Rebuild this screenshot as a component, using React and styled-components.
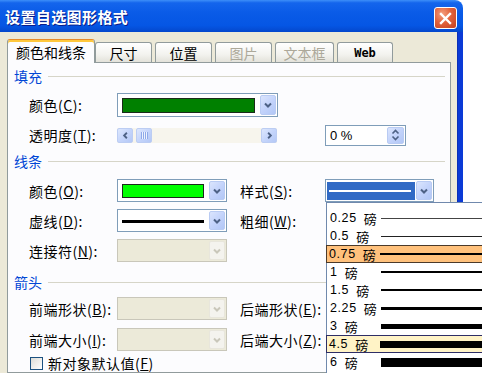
import React from 'react';
import styled, { createGlobalStyle, css } from 'styled-components';

const GlobalStyle = createGlobalStyle`
  html, body { margin: 0; padding: 0; background: #ffffff; }
  body {
    font-family: "Noto Sans CJK SC", "Noto Sans", sans-serif;
    font-size: 14px;
    color: #000;
  }
  #root { width: 482px; height: 373px; }
`;

const Screen = styled.div`
  position: relative;
  width: 482px;
  height: 373px;
  overflow: hidden;
  background: #fff;
`;

const Window = styled.div`
  width: 463px;
  height: 373px;
  display: flex;
  flex-direction: column;
`;

const TitleBar = styled.div`
  height: 32px;
  flex: none;
  display: flex;
  align-items: center;
  padding: 0 6px 0 5px;
  border-top-right-radius: 8px;
  background: linear-gradient(to bottom, #3d8ff9 0%, #1465ec 9%, #0a5be7 40%, #0556e4 80%, #0447cc 100%);
`;

const Title = styled.div`
  color: #fff;
  font-size: 15px;
  font-weight: 700;
  letter-spacing: 0.4px;
  line-height: 1;
  text-shadow: 1px 1px 0 #0a1d8a;
`;

const CloseBtn = styled.div`
  margin: 4px 0 0 auto;
  width: 23px;
  height: 22px;
  box-sizing: border-box;
  border: 1px solid #fff;
  border-radius: 3px;
  background: radial-gradient(circle at 35% 30%, #f4a07f 0%, #e2623c 45%, #c3401f 100%);
  display: flex;
  align-items: center;
  justify-content: center;
`;

const Body = styled.div`
  flex: 1;
  display: flex;
  flex-direction: column;
  background: #ece9d8;
  padding: 7px 7px 0 7px;
  border-right: 5px solid #0b3ad6;
  box-shadow: inset -1px 0 0 #0a2fb8;
`;

const TabRow = styled.div`
  display: flex;
  align-items: flex-end;
  height: 23px;
  position: relative;
  z-index: 1;
`;

const Tab = styled.div`
  width: ${p => p.$w}px;
  margin-left: ${p => p.$ml || 0}px;
  height: 20px;
  box-sizing: border-box;
  border: 1px solid #919b9c;
  border-bottom: none;
  border-radius: 3px 3px 0 0;
  background: linear-gradient(#ffffff, #f3f3ef 60%, #e3e2da);
  display: flex;
  align-items: center;
  justify-content: center;
  font-size: 14px;
  line-height: 1;
  color: ${p => (p.$disabled ? '#aca899' : '#000')};
  ${p => p.$web && css`
    font-family: "DejaVu Sans Mono", monospace;
    font-weight: 700;
    font-size: 12px;
  `}
  ${p => p.$active && css`
    height: 24px;
    margin-bottom: -1px;
    background: #fcfcfe;
    border-top-color: #e68b2c;
    box-shadow: inset 0 2px 0 #ffc83c;
    padding-top: 1px;
  `}
`;

const Panel = styled.div`
  flex: 1;
  border: 1px solid #919b9c;
  background: #fcfcfe;
  padding: 5px 5px 0 6px;
`;

const GroupHeader = styled.div`
  display: flex;
  align-items: center;
  gap: 6px;
  height: 16px;
  margin-top: ${p => p.$top || 0}px;
  color: #0046d5;
  font-size: 14px;
  line-height: 16px;
  &::after {
    content: '';
    flex: 1;
    height: 1px;
    background: #d6d5c8;
  }
`;

const FieldGrid = styled.div`
  display: grid;
  grid-template-columns: 88px 123px 85px auto;
  grid-auto-rows: ${p => p.$rowH}px;
  row-gap: ${p => p.$gap}px;
  align-items: center;
  margin: ${p => p.$top}px 0 0 15px;
`;

const Label = styled.div`
  font-size: 14px;
  letter-spacing: 0.5px;
  white-space: nowrap;
  line-height: 1;
  color: #000;
  u { text-decoration: underline; }
`;

const Combo = styled.div`
  grid-column: ${p => p.$span || 'auto'};
  width: ${p => p.$w}px;
  height: 100%;
  box-sizing: border-box;
  border: 1px solid ${p => (p.$disabled ? '#c9c7ba' : '#7f9db9')};
  background: ${p => (p.$disabled ? '#ecead9' : '#fff')};
  display: flex;
  padding: 1px;
`;

const ComboField = styled.div`
  flex: 1;
  display: flex;
  align-items: center;
  padding: ${p => (p.$flush ? '1px 1px 0 0' : '3px 5px 2px 3px')};
`;

const Swatch = styled.div`
  flex: 1;
  align-self: stretch;
  background: ${p => p.$c};
  border: 1px solid #1b2a1b;
`;

const DashLine = styled.div`
  flex: 1;
  height: 3px;
  background: #000;
`;

const SelBand = styled.div`
  flex: 1;
  align-self: stretch;
  display: flex;
  align-items: center;
  padding: 0 4px 0 2px;
  background: #316ac5;
  &::after {
    content: '';
    flex: 1;
    height: 2px;
    background: #fff;
  }
`;

const DropBtn = styled.div`
  width: 16px;
  flex: none;
  box-sizing: border-box;
  border: 1px solid ${p => (p.$disabled ? '#e8e6dc' : '#b9cbf3')};
  border-radius: 2px;
  background: ${p => (p.$disabled
    ? '#f4f3ee'
    : 'linear-gradient(135deg, #dbe5fd 0%, #c3d3fb 50%, #b2c7f6 100%)')};
  display: flex;
  align-items: center;
  justify-content: center;
`;

const HScroll = styled.div`
  grid-column: 2 / 4;
  width: 160px;
  height: 15px;
  display: flex;
  align-items: center;
  background: #f7f5ed;
`;

const ScrollBtn = styled.div`
  width: 16px;
  height: 15px;
  flex: none;
  box-sizing: border-box;
  border: 1px solid #bccdf3;
  border-radius: 2px;
  background: linear-gradient(135deg, #dde7fd 0%, #c5d5fb 50%, #b4c8f6 100%);
  display: flex;
  align-items: center;
  justify-content: center;
`;

const Thumb = styled.div`
  width: 16px;
  height: 15px;
  margin-left: 3px;
  box-sizing: border-box;
  border: 1px solid #bccdf3;
  border-radius: 2px;
  background:
    repeating-linear-gradient(to right, #8ea9ea 0 1px, #eef3fd 1px 2px) center / 7px 7px no-repeat,
    linear-gradient(135deg, #dde7fd 0%, #c5d5fb 50%, #b4c8f6 100%);
`;

const Track = styled.div`
  flex: 1;
`;

const Spinner = styled.div`
  width: 81px;
  height: 21px;
  box-sizing: border-box;
  border: 1px solid #7f9db9;
  background: #fff;
  display: flex;
  padding: 1px;
`;

const SpinText = styled.span`
  flex: 1;
  display: flex;
  align-items: center;
  padding-left: 3px;
  font-family: "Liberation Sans", sans-serif;
  font-size: 13px;
  white-space: pre;
  line-height: 1;
`;

const SpinBtn = styled.div`
  width: 17px;
  box-sizing: border-box;
  border: 1px solid #b9cbf3;
  border-radius: 2px;
  background: linear-gradient(135deg, #dbe5fd 0%, #c3d3fb 50%, #b2c7f6 100%);
  display: flex;
  flex-direction: column;
  align-items: center;
  justify-content: center;
`;

const CheckRow = styled.div`
  display: flex;
  align-items: center;
  gap: 5px;
  height: 14px;
  margin: 5px 0 0 16px;
  font-size: 14px;
  letter-spacing: 0.5px;
  line-height: 1;
  u { text-decoration: underline; }
`;

const CheckBox = styled.span`
  width: 13px;
  height: 13px;
  box-sizing: border-box;
  border: 1px solid #1c5180;
  background: linear-gradient(135deg, #dcdcd7, #ffffff);
`;

const DropList = styled.div`
  position: absolute;
  left: 326px;
  top: 202px;
  width: 170px;
  height: 180px;
  box-sizing: border-box;
  border: 1px solid #7089ad;
  background: #fff;
  padding-top: 6px;
`;

const Item = styled.div`
  height: 18px;
  display: flex;
  align-items: center;
  padding-left: 3px;
  margin-left: ${p => (p.$hl ? '-1px' : '0')};
  ${p => p.$hl === 'hot' && css`
    background: #ffc17c;
    box-shadow: inset 0 0 0 1px #4b3a2a;
  `}
  ${p => p.$hl === 'cur' && css`
    background: #fff3c6;
    box-shadow: inset 0 0 0 1px #2e2e66;
  `}
`;

const ItemText = styled.div`
  width: 51px;
  flex: none;
  display: flex;
  align-items: center;
  line-height: 1;
`;

const Num = styled.span`
  font-family: "Liberation Sans", sans-serif;
  font-size: 12.5px;
  letter-spacing: 0.6px;
  white-space: pre;
`;

const Unit = styled.span`
  font-size: 13px;
  margin-left: 3px;
`;

const WeightLine = styled.div`
  flex: 1;
  height: ${p => p.$t}px;
  background: ${p => p.$c || '#000'};
`;

const Chevron = ({ dir = 'down', color = '#4d6185', size = 12 }) => {
  const d = {
    down: 'M3 4.5 L6 7.5 L9 4.5',
    up: 'M3 7.5 L6 4.5 L9 7.5',
    left: 'M7.5 3 L4.5 6 L7.5 9',
    right: 'M4.5 3 L7.5 6 L4.5 9',
  }[dir];
  return (
    <svg width={size} height={size} viewBox="0 0 12 12">
      <path d={d} fill="none" stroke={color} strokeWidth="2" />
    </svg>
  );
};

const SmallChev = ({ dir }) => (
  <svg width="9" height="6" viewBox="0 0 9 6">
    <path d={dir === 'up' ? 'M1.5 4.5 L4.5 1.5 L7.5 4.5' : 'M1.5 1.5 L4.5 4.5 L7.5 1.5'} fill="none" stroke="#4d6185" strokeWidth="1.6" />
  </svg>
);

const ColorCombo = ({ w, color, span }) => (
  <Combo $w={w} $span={span}>
    <ComboField><Swatch $c={color} /></ComboField>
    <DropBtn><Chevron /></DropBtn>
  </Combo>
);

const DisabledCombo = ({ w }) => (
  <Combo $w={w} $disabled>
    <ComboField />
    <DropBtn $disabled><Chevron color="#c9c7ba" /></DropBtn>
  </Combo>
);

const weights = [
  { v: '0.25', t: 1, c: '#444' },
  { v: '0.5', t: 1, c: '#222' },
  { v: '0.75', t: 2, hl: 'hot' },
  { v: '1', t: 2 },
  { v: '1.5', t: 2 },
  { v: '2.25', t: 3 },
  { v: '3', t: 5 },
  { v: '4.5', t: 7, hl: 'cur' },
  { v: '6', t: 9 },
];

export default function App() {
  return (
    <Screen>
      <GlobalStyle />
      <Window>
        <TitleBar>
          <Title>设置自选图形格式</Title>
          <CloseBtn>
            <svg width="13" height="13" viewBox="0 0 13 13">
              <path d="M2 2 L11 11 M11 2 L2 11" stroke="#fff" strokeWidth="2.4" strokeLinecap="square" />
            </svg>
          </CloseBtn>
        </TitleBar>
        <Body>
          <TabRow>
            <Tab $w={88} $active>颜色和线条</Tab>
            <Tab $w={57}>尺寸</Tab>
            <Tab $w={57} $ml={3}>位置</Tab>
            <Tab $w={57} $ml={3} $disabled>图片</Tab>
            <Tab $w={59} $ml={3} $disabled>文本框</Tab>
            <Tab $w={56} $ml={3} $web>Web</Tab>
          </TabRow>
          <Panel>
            <GroupHeader>填充</GroupHeader>
            <FieldGrid $rowH={24} $gap={6} $top={9}>
              <Label>颜色(<u>C</u>):</Label>
              <ColorCombo w={161} color="#008000" span="2 / 4" />
              <div />
              <Label>透明度(<u>T</u>):</Label>
              <HScroll>
                <ScrollBtn><Chevron dir="left" size={11} /></ScrollBtn>
                <Thumb />
                <Track />
                <ScrollBtn><Chevron dir="right" size={11} /></ScrollBtn>
              </HScroll>
              <Spinner>
                <SpinText>0 %</SpinText>
                <SpinBtn>
                  <SmallChev dir="up" />
                  <SmallChev dir="down" />
                </SpinBtn>
              </Spinner>
            </FieldGrid>

            <GroupHeader $top={6}>线条</GroupHeader>
            <FieldGrid $rowH={23} $gap={7} $top={10}>
              <Label>颜色(<u>O</u>):</Label>
              <ColorCombo w={110} color="#00ff00" />
              <Label>样式(<u>S</u>):</Label>
              <Combo $w={109}>
                <ComboField $flush><SelBand /></ComboField>
                <DropBtn><Chevron /></DropBtn>
              </Combo>
              <Label>虚线(<u>D</u>):</Label>
              <Combo $w={110}>
                <ComboField><DashLine /></ComboField>
                <DropBtn><Chevron /></DropBtn>
              </Combo>
              <Label>粗细(<u>W</u>):</Label>
              <div />
              <Label>连接符(<u>N</u>):</Label>
              <DisabledCombo w={110} />
            </FieldGrid>

            <GroupHeader $top={12}>箭头</GroupHeader>
            <FieldGrid $rowH={23} $gap={8} $top={7}>
              <Label>前端形状(<u>B</u>):</Label>
              <DisabledCombo w={110} />
              <Label>后端形状(<u>E</u>):</Label>
              <div />
              <Label>前端大小(<u>I</u>):</Label>
              <DisabledCombo w={110} />
              <Label>后端大小(<u>Z</u>):</Label>
              <div />
            </FieldGrid>
            <CheckRow>
              <CheckBox />
              <span>新对象默认值(<u>F</u>)</span>
            </CheckRow>
          </Panel>
        </Body>
      </Window>
      <DropList>
        {weights.map(w => (
          <Item key={w.v} $hl={w.hl}>
            <ItemText>
              <Num>{w.v + ' '}</Num>
              <Unit>磅</Unit>
            </ItemText>
            <WeightLine $t={w.t} $c={w.c} />
          </Item>
        ))}
      </DropList>
    </Screen>
  );
}
